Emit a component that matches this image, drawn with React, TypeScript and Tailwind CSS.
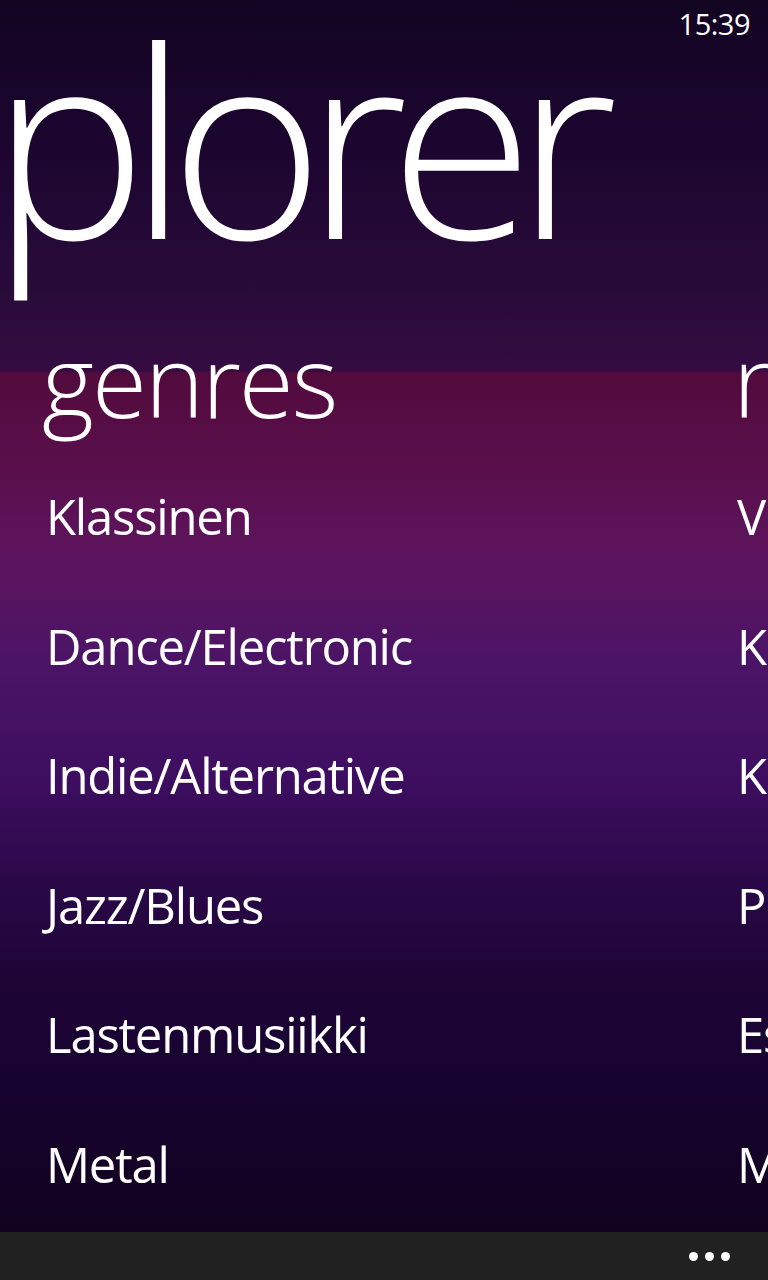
import React from 'react';

const genres = ['Klassinen', 'Dance/Electronic', 'Indie/Alternative', 'Jazz/Blues', 'Lastenmusiikki', 'Metal'];
const nextColumn = ['V', 'Ko', 'Ka', 'Po', 'Es', 'Mu'];

const Column: React.FC<{ title: string; items: string[] }> = ({ title, items }) => (
  <div className="w-[691px] shrink-0 flex flex-col">
    <h2 className="h-[121px] text-[100px] leading-[100px] font-light tracking-[-2px] whitespace-nowrap">
      {title}
    </h2>
    <ul className="flex flex-col pl-[4px]">
      {items.map((item) => (
        <li key={item} className="h-[129.6px] text-[49px] leading-[133px] font-normal tracking-[-1.2px] whitespace-nowrap">
          {item}
        </li>
      ))}
    </ul>
  </div>
);

export default function App() {
  return (
    <div className="w-[768px] h-[1280px] flex flex-col overflow-hidden text-white font-['Segoe_WP','Open_Sans',sans-serif]">
      <main className="relative h-[1232px] overflow-hidden bg-[linear-gradient(180deg,#130422_0px,#1c0630_150px,#2a0b3a_300px,#340c42_371px,#520b3c_373px,#5a0f4c_470px,#5c145e_560px,#4c1466_660px,#3d0e60_780px,#2a0848_880px,#1e0536_980px,#170330_1080px,#12021f_1232px)]">
        {/* system tray */}
        <div className="absolute top-[6px] right-[18px] text-[29px] leading-[36px] font-normal tracking-[-0.5px]">15:39</div>

        <h1 className="h-[329px] pt-[7px] -ml-[9px] text-[262px] leading-[262px] font-light tracking-[-18px] whitespace-nowrap">
          plorer
        </h1>

        <div className="flex gap-0 pl-[42px]">
          <Column title="genres" items={genres} />
          <Column title="new" items={nextColumn} />
        </div>
      </main>

      <footer className="h-[48px] bg-[#212121] flex items-center justify-end pr-[38px]">
        <div className="flex gap-[7px]">
          <span className="w-[9px] h-[9px] rounded-full bg-white" />
          <span className="w-[9px] h-[9px] rounded-full bg-white" />
          <span className="w-[9px] h-[9px] rounded-full bg-white" />
        </div>
      </footer>
    </div>
  );
}
